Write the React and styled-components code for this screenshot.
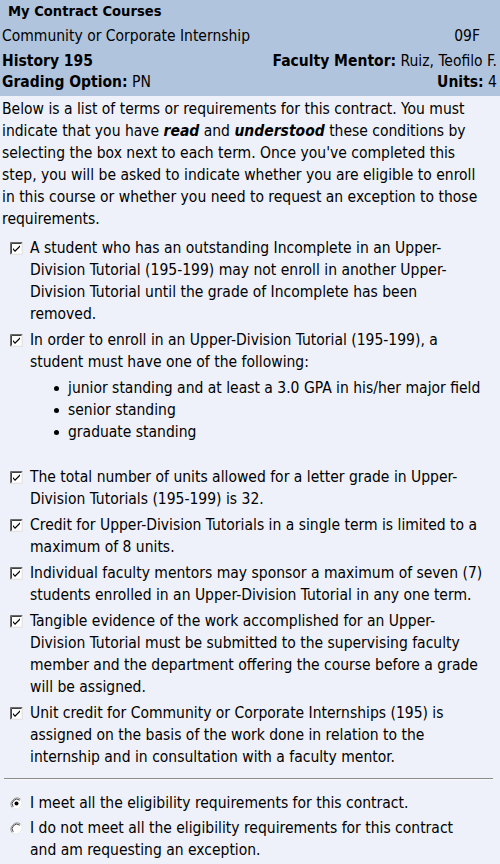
import React from "react";
import styled, { createGlobalStyle } from "styled-components";

const Global = createGlobalStyle`
  html, body { margin: 0; padding: 0; }
  body {
    background: #eef1f9;
    font-family: "DejaVu Sans Condensed", "Liberation Sans", sans-serif;
    font-size: 15.5px;
    color: #000;
  }
`;

const Page = styled.div`
  width: 500px;
  min-height: 864px;
  background: #eef1f9;
`;

const Header = styled.div`
  background: #b0c4de;
  padding: 0 3px 3px 2px;
`;

const Title = styled.div`
  font-weight: bold;
  font-size: 14.6px;
  line-height: 22px;
  padding-left: 6px;
  margin-bottom: 4px;
`;

const HeadRow = styled.div`
  display: flex;
  justify-content: space-between;
  line-height: 21px;
  white-space: nowrap;
  margin-top: ${(p) => p.$gap || 0}px;
`;

const Term = styled.span`
  margin-right: ${(p) => p.$inset || 0}px;
`;

const B = styled.b`
  font-weight: bold;
`;

const Body = styled.div`
  padding: 2px 3px 0 2px;
  line-height: 22px;
`;

const Intro = styled.p`
  margin: 0 0 7px;
  white-space: nowrap;
`;

const Em = styled.b`
  font-style: italic;
  font-weight: bold;
`;

const TermList = styled.div`
  display: flex;
  flex-direction: column;
  gap: 4px;
`;

const Item = styled.div`
  display: flex;
  align-items: flex-start;
  padding-left: 8px;
  gap: 7px;
`;

const BoxWrap = styled.span`
  flex: none;
  width: 13px;
  height: 22px;
  display: flex;
  align-items: center;
`;

const ItemText = styled.div`
  flex: 1;
  white-space: nowrap;
`;

const Bullets = styled.ul`
  list-style: none;
  margin: 4px 0 19px;
  padding: 0;
`;

const Bullet = styled.li`
  display: flex;
  align-items: center;
  padding-left: 24px;
  gap: 9px;
  &::before {
    content: "";
    width: 5px;
    height: 5px;
    border-radius: 50%;
    background: #000;
    flex: none;
  }
`;

const Rule = styled.hr`
  margin: 10px 4px 12px 2px;
  border: none;
  border-top: 1px solid #8c8c8c;
  border-bottom: 1px solid #f8f8f8;
  height: 0;
`;

const RadioList = styled.div`
  display: flex;
  flex-direction: column;
  gap: 3px;
`;

const RadioRow = styled.label`
  display: flex;
  align-items: flex-start;
  padding-left: 8px;
  gap: 7px;
`;

const CheckBox = () => (
  <BoxWrap>
    <svg width="13" height="13" viewBox="0 0 13 13">
      <rect x="0" y="0" width="13" height="13" fill="#f4f4f4" />
      <path d="M0.5 12.5 V0.5 H12.5" stroke="#6a6a6a" fill="none" />
      <path d="M1.5 11.5 V1.5 H11.5" stroke="#404040" fill="none" />
      <path d="M12.5 0.5 V12.5 H0.5" stroke="#e4e4e4" fill="none" />
      <rect x="2" y="2" width="9" height="9" fill="#fff" />
      <path d="M3 6 L5 8.2 L10 3.2 L10 5 L5 10 L3 7.8 Z" fill="#000" />
    </svg>
  </BoxWrap>
);

const Radio = ({ checked }) => (
  <BoxWrap>
    <svg width="13" height="13" viewBox="0 0 13 13">
      <circle cx="6.5" cy="6.5" r="6" fill="#fff" />
      <path d="M2.3 10.7 A6 6 0 0 1 10.7 2.3" stroke="#8a8a8a" fill="none" />
      <path d="M10.7 2.3 A6 6 0 0 1 2.3 10.7" stroke="#e6e6e6" fill="none" />
      <path d="M3.2 9.8 A4.7 4.7 0 0 1 9.8 3.2" stroke="#444" fill="none" />
      {checked && <circle cx="6.5" cy="6.5" r="2" fill="#000" />}
    </svg>
  </BoxWrap>
);

export default function App() {
  return (
    <Page>
      <Global />
      <Header>
        <Title>My Contract Courses</Title>
        <HeadRow>
          <span>Community or Corporate Internship</span>
          <Term $inset={17}>09F</Term>
        </HeadRow>
        <HeadRow $gap={4}>
          <B>History 195</B>
          <span>
            <B>Faculty Mentor:</B> Ruiz, Teofilo F.
          </span>
        </HeadRow>
        <HeadRow>
          <span>
            <B>Grading Option:</B> PN
          </span>
          <span>
            <B>Units:</B> 4
          </span>
        </HeadRow>
      </Header>
      <Body>
        <Intro>
          Below is a list of terms or requirements for this contract. You must
          <br />
          indicate that you have <Em>read</Em> and <Em>understood</Em> these conditions by
          <br />
          selecting the box next to each term. Once you've completed this
          <br />
          step, you will be asked to indicate whether you are eligible to enroll
          <br />
          in this course or whether you need to request an exception to those
          <br />
          requirements.
        </Intro>
        <TermList>
          <Item>
            <CheckBox />
            <ItemText>
              A student who has an outstanding Incomplete in an Upper-
              <br />
              Division Tutorial (195-199) may not enroll in another Upper-
              <br />
              Division Tutorial until the grade of Incomplete has been
              <br />
              removed.
            </ItemText>
          </Item>
          <Item>
            <CheckBox />
            <ItemText>
              In order to enroll in an Upper-Division Tutorial (195-199), a
              <br />
              student must have one of the following:
              <Bullets>
                <Bullet>junior standing and at least a 3.0 GPA in his/her major field</Bullet>
                <Bullet>senior standing</Bullet>
                <Bullet>graduate standing</Bullet>
              </Bullets>
            </ItemText>
          </Item>
          <Item>
            <CheckBox />
            <ItemText>
              The total number of units allowed for a letter grade in Upper-
              <br />
              Division Tutorials (195-199) is 32.
            </ItemText>
          </Item>
          <Item>
            <CheckBox />
            <ItemText>
              Credit for Upper-Division Tutorials in a single term is limited to a
              <br />
              maximum of 8 units.
            </ItemText>
          </Item>
          <Item>
            <CheckBox />
            <ItemText>
              Individual faculty mentors may sponsor a maximum of seven (7)
              <br />
              students enrolled in an Upper-Division Tutorial in any one term.
            </ItemText>
          </Item>
          <Item>
            <CheckBox />
            <ItemText>
              Tangible evidence of the work accomplished for an Upper-
              <br />
              Division Tutorial must be submitted to the supervising faculty
              <br />
              member and the department offering the course before a grade
              <br />
              will be assigned.
            </ItemText>
          </Item>
          <Item>
            <CheckBox />
            <ItemText>
              Unit credit for Community or Corporate Internships (195) is
              <br />
              assigned on the basis of the work done in relation to the
              <br />
              internship and in consultation with a faculty mentor.
            </ItemText>
          </Item>
        </TermList>
        <Rule />
        <RadioList>
          <RadioRow>
            <Radio checked />
            <ItemText>I meet all the eligibility requirements for this contract.</ItemText>
          </RadioRow>
          <RadioRow>
            <Radio />
            <ItemText>
              I do not meet all the eligibility requirements for this contract
              <br />
              and am requesting an exception.
            </ItemText>
          </RadioRow>
        </RadioList>
      </Body>
    </Page>
  );
}
